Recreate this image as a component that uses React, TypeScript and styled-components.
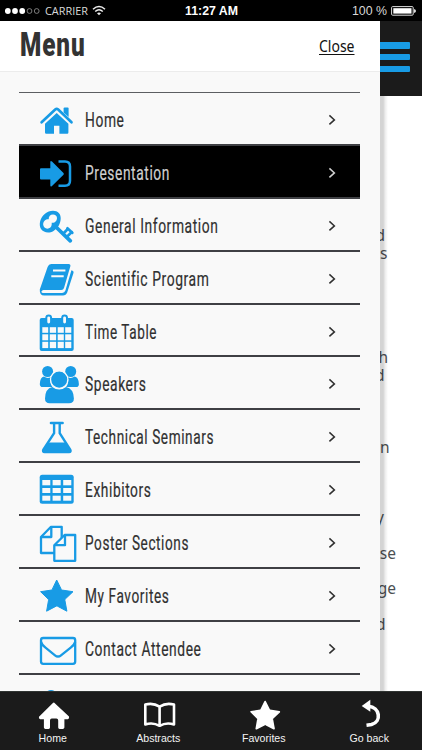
import React, { useLayoutEffect, useRef, useState } from "react";
import styled, { createGlobalStyle } from "styled-components";

const BLUE = "#189be5";
const DARK = "#1b1b1b";

const GlobalStyle = createGlobalStyle`
  * { box-sizing: border-box; }
  body { margin: 0; background: #fff; }
  ul { list-style: none; margin: 0; padding: 0; }
`;

/* ---------- Text squeezed to a given width ---------- */

const FitBox = styled.span<{ $w: number }>`
  display: block;
  width: ${(p) => p.$w}px;
  white-space: nowrap;
`;

const FitInner = styled.span`
  display: inline-block;
  transform-origin: 0 50%;
`;

function Fit({ width, children }: { width: number; children: string }) {
  const ref = useRef<HTMLSpanElement>(null);
  const [scale, setScale] = useState(1);
  useLayoutEffect(() => {
    if (ref.current) {
      const style = getComputedStyle(ref.current);
      setScale(width / parseFloat(style.width));
    }
  }, [width]);
  return (
    <FitBox $w={width}>
      <FitInner ref={ref} style={{ transform: `scaleX(${scale})` }}>
        {children}
      </FitInner>
    </FitBox>
  );
}

/* ---------- Frame ---------- */

const Screen = styled.div`
  position: relative;
  width: 422px;
  height: 750px;
  overflow: hidden;
  display: flex;
  flex-direction: column;
  background: #fff;
`;

const StatusBar = styled.div`
  flex: none;
  height: 21px;
  padding: 0 5px;
  display: grid;
  grid-template-columns: 1fr auto 1fr;
  align-items: center;
  background: #000;
  color: #d8d8d8;
  font: 11.5px/21px "Open Sans", sans-serif;
`;

const StatusSide = styled.div<{ $end?: boolean }>`
  display: flex;
  align-items: center;
  gap: ${(p) => (p.$end ? 4 : 4)}px;
  justify-content: ${(p) => (p.$end ? "flex-end" : "flex-start")};
`;

const Clock = styled.div`
  padding-top: 1px;
  color: #fff;
  font: bold 12px/20px "Liberation Sans", sans-serif;
`;

const Percent = styled.div`
  padding-top: 1px;
  font: 12px/20px "Liberation Sans", sans-serif;
`;

const Main = styled.div`
  position: relative;
  flex: 1;
  min-height: 0;
`;

/* ---------- Page under the drawer ---------- */

const TopBar = styled.div`
  height: 75px;
  background: ${DARK};
  display: flex;
  flex-direction: column;
  justify-content: flex-start;
  align-items: flex-end;
  gap: 5.6px;
  padding: 21.4px 12px 0 0;
`;

const Bar = styled.div`
  width: 34px;
  height: 6.2px;
  border-radius: 1px;
  background: ${BLUE};
`;

const PageLines = styled.div`
  padding-top: 130px;
  font: 15.5px/18px "Noto Sans", sans-serif;
  color: #4c4f52;
`;

const PageLine = styled.div<{ $gap?: number; $inset: number }>`
  margin-top: ${(p) => p.$gap ?? 0}px;
  padding-right: ${(p) => p.$inset}px;
  text-align: right;
`;

/* ---------- Drawer ---------- */

const Drawer = styled.nav`
  position: absolute;
  top: 0;
  left: 0;
  bottom: 0;
  width: 379.5px;
  overflow: hidden;
  background: #f9f9f9;
`;

const DrawerShade = styled.div`
  position: absolute;
  top: 75px;
  left: 379.5px;
  bottom: 0;
  width: 8px;
  background: linear-gradient(90deg, rgba(0, 0, 0, 0.17) 0 40%, rgba(0, 0, 0, 0.07) 65%, transparent);
`;

const DrawerHead = styled.header`
  height: 51px;
  padding: 0 25px 0 20px;
  display: flex;
  justify-content: space-between;
  align-items: center;
  background: #fff;
  border-bottom: 1px solid #ececec;
`;

const Title = styled.h1`
  margin: -3px 0 0;
  color: #333;
  font: 900 33px/40px Roboto, sans-serif;
  letter-spacing: 1.2px;
`;

const Close = styled.a`
  color: #111;
  font: 15.5px/20px "Noto Sans", sans-serif;
  margin-top: -1px;

  ${FitInner} {
    text-decoration: underline;
    text-underline-offset: 2px;
  }
`;

const List = styled.ul`
  margin: 20px 19.5px 0 19px;
  border-top: 1px solid #5c5e62;
`;

const Item = styled.li<{ $active?: boolean }>`
  height: 52.9px;
  padding: 0 24px 0 17px;
  display: flex;
  align-items: center;
  border-bottom: 2px solid #3f4044;
  background: ${(p) => (p.$active ? "#000" : "transparent")};
  color: ${(p) => (p.$active ? "#d0d0d0" : "#303030")};
`;

const ItemIcon = styled.svg`
  flex: none;
  width: 44px;
  height: 51px;
  fill: ${BLUE};
`;

const Label = styled.span`
  flex: 1;
  padding: 3px 0 0 5px;
  font: 400 21px/30px Roboto, sans-serif;
  letter-spacing: 0.9px;
  -webkit-text-stroke: 0.2px currentColor;
`;

const Chevron = styled.svg`
  flex: none;
  width: 8px;
  height: 12px;
  margin-top: 3px;
  fill: none;
  stroke: currentColor;
  stroke-width: 1.5;
`;

/* ---------- Footer ---------- */

const Footer = styled.footer`
  position: relative;
  flex: none;
  height: 59px;
  display: grid;
  grid-template-columns: repeat(4, 1fr);
  background: ${DARK};
  border-top: 1px solid #303432;
`;

const Tab = styled.div`
  display: flex;
  flex-direction: column;
  align-items: center;
  padding-top: 7px;
  color: #f4f4f4;
  font: 10.6px/14px "Liberation Sans", sans-serif;
`;

const TabIcon = styled.svg`
  width: 36px;
  height: 34px;
  margin-bottom: -2px;
  fill: #fff;
`;

/* ---------- Menu drawings, 44 x 51 ---------- */

const columns4: [number, number][] = [[6.3, 5.9], [13.8, 6.3], [21.7, 6.1], [29.2, 6.1]];
const calendarRows: [number, number][] = [[22.2, 5.6], [29.3, 6], [36.8, 6.3]];
const columns3: [number, number][] = [[6.3, 8], [16.6, 8.1], [27.2, 8.1]];
const tableRows: [number, number][] = [[17, 5.3], [25, 5], [32.7, 5]];

const cells = (cols: [number, number][], rows: [number, number][]) =>
  rows.flatMap(([y, h]) =>
    cols.map(([x, w]) => <rect key={`${x}-${y}`} x={x} y={y} width={w} height={h} fill="#f9f9f9" />)
  );

const star =
  "M20.7 11 L25.3 20.4 Q25.6 21 26.3 21.1 L37 22.7 L29.3 30 Q28.8 30.5 28.9 31.3 L30.9 42.2 L21.5 37.2 Q20.8 36.8 20.1 37.2 L10.6 42.2 L12.5 31.3 Q12.6 30.5 12.1 30 L4.6 22.7 L15.2 21.1 Q15.9 21 16.2 20.4Z";

const drawings = {
  home: (
    <>
      <path d="M27.6 15.5Q27.6 14.4 28.6 14.4H31.6Q32.6 14.4 32.6 15.5V24L27.6 19.5Z" />
      <path d="M5.6 29.3 L19.2 16.6 Q20.7 15.3 22.2 16.6 L35.5 29.3" fill="none" stroke={BLUE} strokeWidth="2.7" strokeLinecap="round" />
      <path d="M20.7 20 L32.4 30.8V39.6Q32.4 40.8 31.2 40.8H23.4V32.7H18V40.8H10.2Q9 40.8 9 39.6V30.8Z" />
    </>
  ),
  enter: (
    <>
      <path d="M5 22.2H14.3V16Q14.5 14.3 16 15.5L27.5 27Q28.2 27.9 27.5 28.8L16 40Q14.5 41.2 14.3 39.6V33.6H5Q4 33.6 4 32.6V23.2Q4 22.2 5 22.2Z" />
      <path d="M22.5 15.6H29Q34 15.6 34 20.5V34.8Q34 39.8 29 39.8H22.5" fill="none" stroke={BLUE} strokeWidth="2.5" />
    </>
  ),
  key: (
    <>
      <path
        fillRule="evenodd"
        d="M17 11.7C22 11.7 25 15 24.7 19.5C24.5 25 22 29 17.5 32C13 34.7 7.5 33.7 5 30C2.3 25.5 4.3 18.5 9 14.8C11.3 12.9 14 11.7 17 11.7ZM17 15.4C14.3 15.4 12.6 17.2 12.7 20.2C9.2 19.8 7 22.6 7.2 25.8C7.5 28.8 10.3 30.4 13 29.3C15.2 28.4 16 26.5 15.7 23.8C19 24.2 21 21.7 21 19C21 16.8 19.2 15.4 17 15.4Z"
      />
      <path d="M20.5 28.5L34.3 41.8" fill="none" stroke={BLUE} strokeWidth="3.8" strokeLinecap="round" />
      <path d="M27.6 34.2L32 29.8M31.2 37.4L35.8 33M31.4 29.3L36.3 33.8" fill="none" stroke={BLUE} strokeWidth="2.7" strokeLinecap="round" />
    </>
  ),
  book: (
    <>
      <path d="M15.2 12H32.5Q35 12 34.3 14.6L28 36Q27.4 38 25.3 38H7.5Q6 38 5.4 39.5Q5.4 41 7.2 41H26.2Q28.6 41 29.4 38.6L35.4 18.2Q38.2 18.8 37.4 21.2L31.2 40.6Q30 43.6 27 43.6H8.2Q3.4 43.6 3.8 37.6L11.6 15Q12.7 12 15.2 12Z" />
      <path d="M17 18.4H29.4M15.3 24.2H27.7" stroke="#f9f9f9" strokeWidth="2" />
    </>
  ),
  calendar: (
    <>
      <rect x="3.7" y="13" width="34" height="33" rx="2" />
      {[12.7, 28.6].map((x) => (
        <rect key={x} x={x - 2.4} y="10.4" width="4.8" height="9" rx="2.4" fill="#f9f9f9" stroke={BLUE} strokeWidth="2" />
      ))}
      {cells(columns4, calendarRows)}
    </>
  ),
  people: (
    <>
      <circle cx="11.6" cy="14.5" r="5.5" />
      <circle cx="34.7" cy="14.5" r="5.5" />
      <path d="M8 19.6Q11.5 22 15 19.9Q13 25 16.5 30H6.5Q4 30 3.8 27.2Q4 20.5 8 19.6Z" />
      <path d="M38.5 19.6Q35 22 31.5 19.9Q33.5 25 30 30H40.2Q42.8 30 42.9 27.2Q42.7 20.5 38.5 19.6Z" />
      <circle cx="23.2" cy="22.6" r="8.7" stroke="#f9f9f9" strokeWidth="1.3" />
      <path d="M16.3 30Q23.2 35.2 30 30Q37.6 31.5 37.9 41.5Q37.9 46.3 33 46.3H13.7Q9 46.3 9 41.5Q9.2 31.5 16.3 30Z" />
    </>
  ),
  flask: (
    <>
      <path d="M15 13H26.6" stroke={BLUE} strokeWidth="2.6" strokeLinecap="round" />
      <path d="M18.1 13V23.2L7.4 39.5Q6.3 42 8.6 42H33Q35.4 42 34.2 39.5L23.7 23.2V13" fill="none" stroke={BLUE} strokeWidth="2.4" />
      <path d="M12.2 32.6H29.5L35 41L33.5 42.9H8L6.5 41Z" />
    </>
  ),
  table: (
    <>
      <rect x="3.7" y="11.8" width="34" height="29" rx="2.5" />
      {cells(columns3, tableRows)}
    </>
  ),
  pages: (
    <g fill="#f9f9f9" stroke={BLUE} strokeWidth="2.3" strokeLinejoin="round">
      <path d="M15 10.8H25.7V37H5V21Z" />
      <path d="M15.3 10.8V21H5" fill="none" />
      <path d="M28.6 19H39.2V44.8H18.3V29.2Z" />
      <path d="M29 19V29.2H18.3" fill="none" />
    </g>
  ),
  star: <path d={star} stroke={BLUE} strokeWidth="1" strokeLinejoin="round" />,
  mail: (
    <g fill="none" stroke={BLUE} strokeWidth="2.3">
      <rect x="5" y="16" width="34.2" height="25.8" rx="2.2" />
      <path d="M5 19.8Q6 23 9.5 25.7L19 33.3Q22 35.8 25 33.3L34.7 25.7Q38.2 23 39.2 19.8" />
    </g>
  ),
  person: <circle cx="15" cy="21.2" r="6.2" />,
};

type Entry = { icon: keyof typeof drawings; label: string; width: number; active?: boolean };

const entries: Entry[] = [
  { icon: "home", label: "Home", width: 39.5 },
  { icon: "enter", label: "Presentation", width: 85, active: true },
  { icon: "key", label: "General Information", width: 133.5 },
  { icon: "book", label: "Scientific Program", width: 124.5 },
  { icon: "calendar", label: "Time Table", width: 72 },
  { icon: "people", label: "Speakers", width: 61.5 },
  { icon: "flask", label: "Technical Seminars", width: 129 },
  { icon: "table", label: "Exhibitors", width: 66.5 },
  { icon: "pages", label: "Poster Sections", width: 104 },
  { icon: "star", label: "My Favorites", width: 84.5 },
  { icon: "mail", label: "Contact Attendee", width: 116.5 },
];

const pageText = [
  { text: "d", gap: 0, inset: 37 },
  { text: "s", gap: 0, inset: 34.5 },
  { text: "h", gap: 86, inset: 34 },
  { text: "d", gap: 0, inset: 37.5 },
  { text: "n", gap: 54, inset: 32.5 },
  { text: "y", gap: 52, inset: 38 },
  { text: "se", gap: 18, inset: 26 },
  { text: "ge", gap: 17, inset: 26 },
  { text: "d", gap: 18, inset: 36.5 },
];

const tabs = [
  {
    label: "Home",
    icon: <path d="M19 3.4L34 17.5Q34.7 19.6 32.8 20.2H29.4V28.6Q29.2 30 27.8 30H24.6Q23.2 30 23.2 28.6V21.5Q23.2 19.6 21.4 19.6H16.8Q15 19.6 15 21.5V28.6Q15 30 13.6 30H10.4Q9 30 8.9 28.6V20.2H5.2Q3.3 19.6 4 17.8L17.4 4.4Q18.2 3.4 19 3.4Z" />,
  },
  {
    label: "Abstracts",
    icon: (
      <g fill="none" stroke="#fff" strokeWidth="2.6" strokeLinejoin="round">
        <path d="M19.6 7.6Q13 3.4 5.3 5.6V25.4Q13 23 19.6 26.8Q26.2 23 34 25.4V5.6Q26.2 3.4 19.6 7.6ZM19.6 7.6V26.8" />
      </g>
    ),
  },
  {
    label: "Favorites",
    icon: <path transform="translate(1.1 -7) scale(.87)" d={star} stroke="#fff" strokeWidth="2" strokeLinejoin="round" />,
  },
  {
    label: "Go back",
    icon: (
      <>
        <path d="M10.7 6.9L19.3 .8V12.8Z" />
        <path d="M17.5 7.3C29 8.2 31 22.5 20.5 25.6L15.5 26.2" fill="none" stroke="#fff" strokeWidth="3.6" />
      </>
    ),
  },
];

export default function App() {
  return (
    <>
      <GlobalStyle />
      <Screen>
        <StatusBar>
          <StatusSide>
            <svg width="36" height="8" viewBox="0 0 36 8">
              {[2.8, 10, 17.2].map((x) => <circle key={x} cx={x} cy="4" r="2.9" fill="#fff" />)}
              {[24.5, 31.7].map((x) => <circle key={x} cx={x} cy="4" r="2.4" fill="none" stroke="#999" strokeWidth=".8" />)}
            </svg>
            <Fit width={43}>CARRIER</Fit>
            <svg width="14" height="11" viewBox="0 0 14 11" fill="none" stroke="#eee" strokeWidth="1.5">
              <path d="M1 4.2Q7-1.2 13 4.2M3.2 6.5Q7 3 10.8 6.5" />
              <path d="M5 8.3Q7 6.8 9 8.3L7 10.3Z" fill="#eee" stroke="none" />
            </svg>
          </StatusSide>
          <Clock><Fit width={53}>11:27 AM</Fit></Clock>
          <StatusSide $end>
            <Percent><Fit width={35}>100 %</Fit></Percent>
            <svg width="26" height="10" viewBox="0 0 26 10">
              <rect x=".6" y=".6" width="21.6" height="8.6" rx="1" fill="none" stroke="#ddd" />
              <rect x="2.3" y="2.2" width="18.2" height="5.4" fill="#fff" />
              <path d="M23 3Q25 3.3 25 5Q25 6.6 23 7Z" fill="#ddd" />
            </svg>
          </StatusSide>
        </StatusBar>

        <Main>
          <TopBar>
            <Bar />
            <Bar />
            <Bar />
          </TopBar>
          <PageLines>
            {pageText.map((line, i) => (
              <PageLine key={i} $gap={line.gap} $inset={line.inset}>{line.text}</PageLine>
            ))}
          </PageLines>

          <DrawerShade />
          <Drawer>
            <DrawerHead>
              <Title><Fit width={65.5}>Menu</Fit></Title>
              <Close><Fit width={35.5}>Close</Fit></Close>
            </DrawerHead>
            <List>
              {entries.map((e) => (
                <Item key={e.label} $active={e.active}>
                  <ItemIcon viewBox="0 0 44 51">{drawings[e.icon]}</ItemIcon>
                  <Label><Fit width={e.width}>{e.label}</Fit></Label>
                  <Chevron viewBox="0 0 8 12"><path d="M1.4 1.4L6.4 5.9L1.4 10.4" /></Chevron>
                </Item>
              ))}
              <Item>
                <ItemIcon viewBox="0 0 44 51">{drawings.person}</ItemIcon>
              </Item>
            </List>
          </Drawer>
        </Main>

        <Footer>
          {tabs.map((t) => (
            <Tab key={t.label}>
              <TabIcon viewBox="0 0 36 34">{t.icon}</TabIcon>
              {t.label}
            </Tab>
          ))}
        </Footer>
      </Screen>
    </>
  );
}
